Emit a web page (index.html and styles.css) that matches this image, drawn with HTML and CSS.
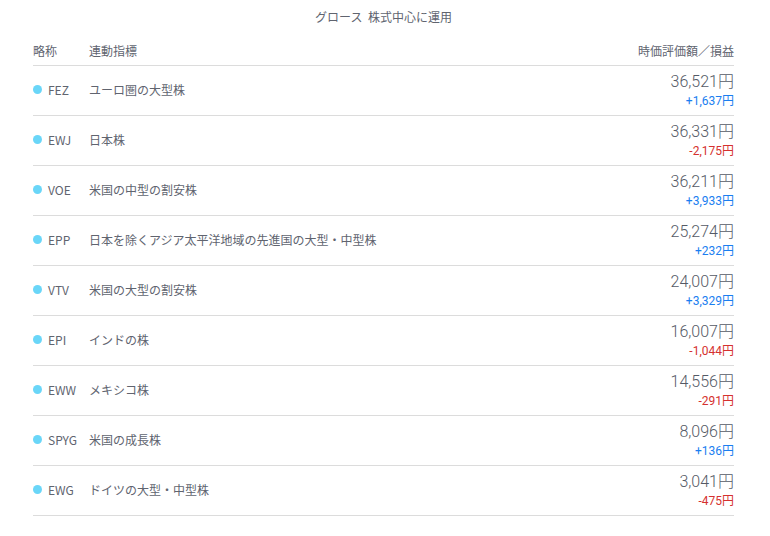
FILE: index.html
```html
<!DOCTYPE html>
<html lang="ja">
<head>
<meta charset="utf-8">
<link rel="stylesheet" href="styles.css">
</head>
<body>
<div class="page">
  <h1 class="title">グロース&nbsp;&nbsp;株式中心に運用</h1>
  <div class="table">
    <div class="row head">
      <div class="c-tick">略称</div>
      <div class="c-name">連動指標</div>
      <div class="c-head">時価評価額／損益</div>
    </div>
    <div class="row">
      <div class="c-tick"><span class="dot"></span>FEZ</div>
      <div class="c-name">ユーロ圏の大型株</div>
      <div class="c-val"><div class="big">36,521円</div><div class="chg up">+1,637円</div></div>
    </div>
    <div class="row">
      <div class="c-tick"><span class="dot"></span>EWJ</div>
      <div class="c-name">日本株</div>
      <div class="c-val"><div class="big">36,331円</div><div class="chg down">-2,175円</div></div>
    </div>
    <div class="row">
      <div class="c-tick"><span class="dot"></span>VOE</div>
      <div class="c-name">米国の中型の割安株</div>
      <div class="c-val"><div class="big">36,211円</div><div class="chg up">+3,933円</div></div>
    </div>
    <div class="row">
      <div class="c-tick"><span class="dot"></span>EPP</div>
      <div class="c-name">日本を除くアジア太平洋地域の先進国の大型・中型株</div>
      <div class="c-val"><div class="big">25,274円</div><div class="chg up">+232円</div></div>
    </div>
    <div class="row">
      <div class="c-tick"><span class="dot"></span>VTV</div>
      <div class="c-name">米国の大型の割安株</div>
      <div class="c-val"><div class="big">24,007円</div><div class="chg up">+3,329円</div></div>
    </div>
    <div class="row">
      <div class="c-tick"><span class="dot"></span>EPI</div>
      <div class="c-name">インドの株</div>
      <div class="c-val"><div class="big">16,007円</div><div class="chg down">-1,044円</div></div>
    </div>
    <div class="row">
      <div class="c-tick"><span class="dot"></span>EWW</div>
      <div class="c-name">メキシコ株</div>
      <div class="c-val"><div class="big">14,556円</div><div class="chg down">-291円</div></div>
    </div>
    <div class="row">
      <div class="c-tick"><span class="dot"></span>SPYG</div>
      <div class="c-name">米国の成長株</div>
      <div class="c-val"><div class="big">8,096円</div><div class="chg up">+136円</div></div>
    </div>
    <div class="row">
      <div class="c-tick"><span class="dot"></span>EWG</div>
      <div class="c-name">ドイツの大型・中型株</div>
      <div class="c-val"><div class="big">3,041円</div><div class="chg down">-475円</div></div>
    </div>
  </div>
</div>
</body>
</html>
```
FILE: styles.css
```css
* { box-sizing: border-box; }
html, body { margin: 0; padding: 0; background: #fff; }
body {
  font-family: "Noto Sans CJK JP", "Noto Sans", sans-serif;
  color: #60646f;
  font-size: 12px;
}
.page {
  width: 701px;
  margin-left: 33px;
  padding-top: 8px;
}
.title {
  margin: 0 0 16px 0;
  font-size: 12px;
  font-weight: normal;
  text-align: center;
  line-height: 18px;
  color: #60646f;
}
.row {
  display: grid;
  grid-template-columns: 56px 1fr auto;
  align-items: center;
  height: 50px;
  border-bottom: 1px solid #dcdcdc;
}
.row.head {
  height: 24px;
  align-items: start;
  line-height: 18px;
}
.c-head { text-align: right; }
.c-tick, .c-name { padding-bottom: 3px; }
.row.head .c-tick, .row.head .c-name { padding-bottom: 0; }
.c-tick { display: flex; align-items: center; }
.dot {
  width: 9px;
  height: 9px;
  border-radius: 50%;
  background: #6ad6f8;
  margin-right: 6px;
}
.c-val {
  text-align: right;
  font-family: Roboto, "Noto Sans CJK JP", sans-serif;
  font-weight: 300;
}
.big { font-size: 16px; line-height: 20px; color: #555a66; }
.chg { font-size: 12px; line-height: 18px; font-weight: 400; }
.up { color: #1a7ef0; }
.down { color: #d5312f; }
```
